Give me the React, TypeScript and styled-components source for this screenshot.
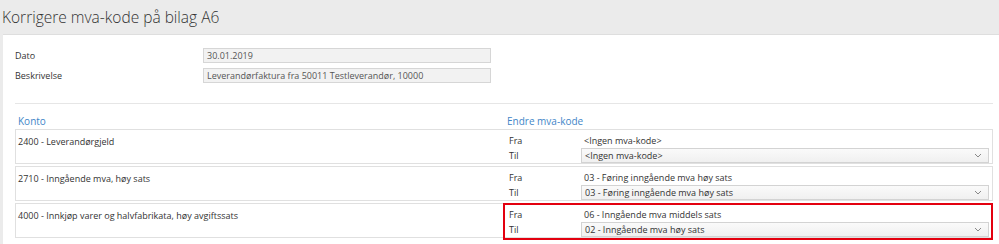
import React from "react";
import styled, { createGlobalStyle } from "styled-components";

const GlobalStyle = createGlobalStyle`
  html, body { margin: 0; padding: 0; }
  body {
    background: #ebebeb;
    font-family: "Open Sans", "Liberation Sans", sans-serif;
    color: #333;
    width: 999px;
    height: 244px;
    overflow: hidden;
  }
  * { box-sizing: border-box; }
`;

const Header = styled.div`
  height: 34px;
  padding-left: 2px;
  display: flex;
  align-items: center;
`;

const Title = styled.h1`
  margin: 0 0 1px 0;
  font-size: 15.5px;
  font-weight: 300;
  color: #333;
`;

const Panel = styled.div`
  margin-left: 3px;
  background: #fff;
  border-top: 1px solid #dedede;
  padding: 13px 6px 0 12px;
  height: 210px;
`;

const FormGrid = styled.div`
  display: grid;
  grid-template-columns: 188px 288px;
  row-gap: 5px;
  align-items: center;
`;

const Label = styled.div`
  font-size: 9px;
  line-height: 15px;
`;

const ReadInput = styled.div`
  height: 15px;
  background: #f2f2f2;
  border: 1px solid #d6d6d6;
  font-size: 9px;
  line-height: 13px;
  padding-left: 3px;
  color: #555;
  white-space: nowrap;
`;

const Divider = styled.hr`
  margin: 20px 0 0 0;
  border: none;
  border-top: 1px solid #e6e6e6;
  width: 978px;
`;

const ColHeads = styled.div`
  display: grid;
  grid-template-columns: 489px 1fr;
  padding: 11px 0 1px 3px;
  width: 978px;
`;

const ColHead = styled.div`
  color: #3f86c8;
  font-size: 10px;
  line-height: 13px;
`;

const Rows = styled.div`
  display: flex;
  flex-direction: column;
  gap: 2px;
  width: 978px;
`;

const Row = styled.div`
  display: grid;
  grid-template-columns: 487px 1fr;
  height: 35px;
  border: 1px solid #e0e0e0;
`;

const AccountCell = styled.div`
  font-size: 9px;
  padding: 5px 0 0 2px;
  line-height: 13px;
`;

const ChangeCell = styled.div<{ $highlight?: boolean }>`
  display: grid;
  grid-template-columns: 72px 1fr;
  grid-template-rows: 15px 15px;
  align-items: center;
  padding: 2px 2px 1px 4px;
  margin: -1px -1px -1px 0;
  border: 2px solid ${(p) => (p.$highlight ? "#e3000f" : "transparent")};
`;

const SmallLabel = styled.div`
  font-size: 9px;
  line-height: 13px;
`;

const Value = styled.div`
  font-size: 9px;
  line-height: 13px;
  padding-left: 3px;
`;

const Select = styled.div`
  height: 15px;
  border: 1px solid #d3d3d3;
  background: linear-gradient(#fafafa, #f0f0f0);
  font-size: 9px;
  line-height: 13px;
  padding-left: 3px;
  display: flex;
  align-items: center;
  justify-content: space-between;
`;

const Chevron = () => (
  <svg width="8" height="5" viewBox="0 0 8 5" style={{ marginRight: 6 }}>
    <path d="M1 1 L4 4 L7 1" fill="none" stroke="#888" strokeWidth="1" />
  </svg>
);

const rows = [
  { konto: "2400 - Leverandørgjeld", fra: "<Ingen mva-kode>", til: "<Ingen mva-kode>" },
  { konto: "2710 - Inngående mva, høy sats", fra: "03 - Føring inngående mva høy sats", til: "03 - Føring inngående mva høy sats" },
  { konto: "4000 - Innkjøp varer og halvfabrikata, høy avgiftssats", fra: "06 - Inngående mva middels sats", til: "02 - Inngående mva høy sats", hl: true },
];

export default function App() {
  return (
    <>
      <GlobalStyle />
      <Header>
        <Title>Korrigere mva-kode på bilag A6</Title>
      </Header>
      <Panel>
        <FormGrid>
          <Label>Dato</Label>
          <ReadInput>30.01.2019</ReadInput>
          <Label>Beskrivelse</Label>
          <ReadInput>Leverandørfaktura fra 50011 Testleverandør, 10000</ReadInput>
        </FormGrid>
        <Divider />
        <ColHeads>
          <ColHead>Konto</ColHead>
          <ColHead>Endre mva-kode</ColHead>
        </ColHeads>
        <Rows>
          {rows.map((r) => (
            <Row key={r.konto}>
              <AccountCell>{r.konto}</AccountCell>
              <ChangeCell $highlight={r.hl}>
                <SmallLabel>Fra</SmallLabel>
                <Value>{r.fra}</Value>
                <SmallLabel>Til</SmallLabel>
                <Select>
                  {r.til}
                  <Chevron />
                </Select>
              </ChangeCell>
            </Row>
          ))}
        </Rows>
      </Panel>
    </>
  );
}
